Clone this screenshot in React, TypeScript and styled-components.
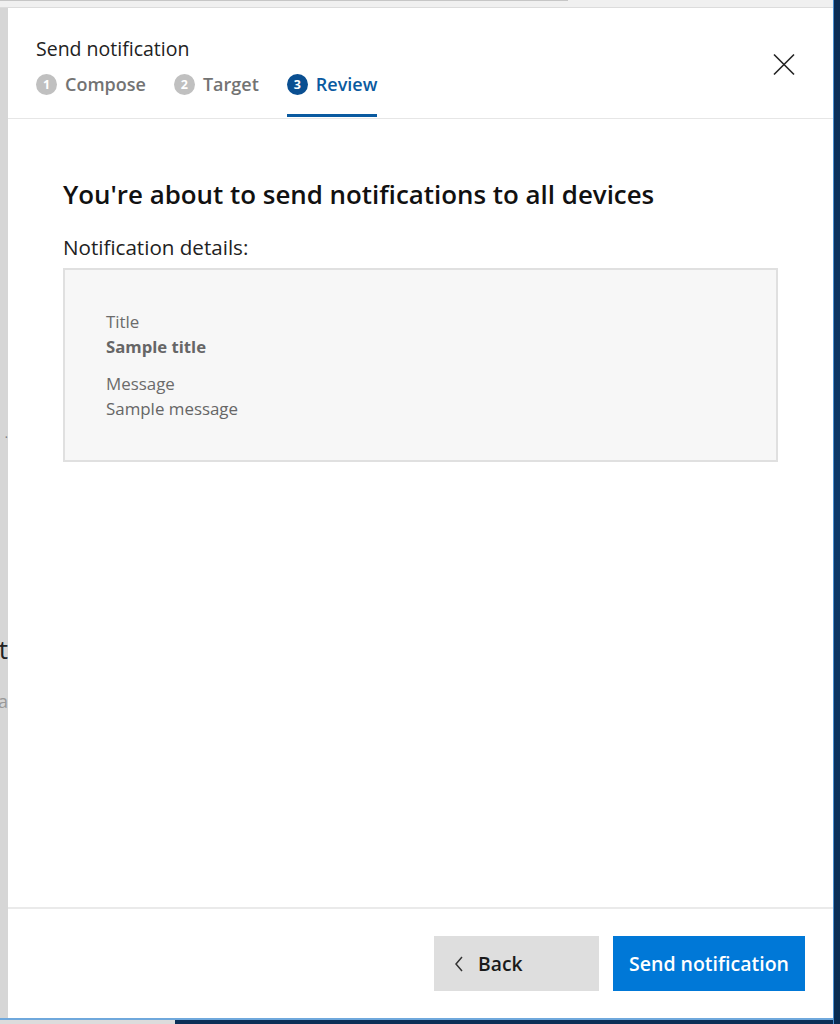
import React from "react";
import styled, { createGlobalStyle } from "styled-components";

const Global = createGlobalStyle`
  html, body { margin: 0; padding: 0; }
  body { font-family: "Open Sans", "Noto Sans", sans-serif; }
  * { box-sizing: border-box; }
`;

const Screen = styled.div`
  width: 840px;
  height: 1024px;
  display: flex;
  background: #0b2f57;
  overflow: hidden;
`;

const Main = styled.div`
  flex: 1;
  display: flex;
  flex-direction: column;
`;

const TopBar = styled.div`
  height: 8px;
  background: #f0f0f0;
  border-bottom: 1px solid #dcdcdc;
`;

const TopLine = styled.div`
  width: 568px;
  height: 1px;
  background: #c6c6c6;
`;

const Row = styled.div`
  flex: 1;
  display: flex;
`;

const LeftStrip = styled.div`
  width: 8px;
  background: #d6d6d6;
  position: relative;
  overflow: hidden;
`;

const Peek = styled.span<{ $top: number; $color: string; $size: number }>`
  position: absolute;
  top: ${(p) => p.$top}px;
  right: 0;
  font-size: ${(p) => p.$size}px;
  color: ${(p) => p.$color};
  line-height: 1;
`;

const Dialog = styled.div`
  flex: 1;
  background: #fff;
  display: flex;
  flex-direction: column;
`;

const Header = styled.div`
  height: 111px;
  border-bottom: 1px solid #e6e6e6;
  padding: 28px 28px 0 28px;
  display: flex;
  justify-content: space-between;
`;

const HeaderText = styled.div`
  display: flex;
  flex-direction: column;
`;

const DialogTitle = styled.div`
  font-size: 19.5px;
  color: #222;
  line-height: 26px;
`;

const Steps = styled.div`
  display: flex;
  gap: 28px;
  margin-top: 3px;
`;

const Step = styled.div<{ $active?: boolean }>`
  display: flex;
  align-items: center;
  gap: 8px;
  height: 52px;
  padding-bottom: 11px;
  border-bottom: 3px solid ${(p) => (p.$active ? "#0a5aa0" : "transparent")};
  color: ${(p) => (p.$active ? "#0a5aa0" : "#737373")};
  font-size: 18px;
  font-weight: 600;
`;

const Num = styled.span<{ $active?: boolean }>`
  width: 21px;
  height: 21px;
  border-radius: 50%;
  background: ${(p) => (p.$active ? "#0a4f91" : "#c0c0c0")};
  color: #fff;
  font-size: 12.5px;
  font-weight: 700;
  display: flex;
  align-items: center;
  justify-content: center;
`;

const Close = styled.button`
  border: none;
  background: none;
  padding: 0;
  width: 24px;
  height: 24px;
  margin-top: 17px;
  margin-right: 9px;
  cursor: pointer;
`;

const Body = styled.div`
  flex: 1;
  padding: 59px 55px 0 55px;
  display: flex;
  flex-direction: column;
`;

const Heading = styled.h1`
  margin: 0;
  font-size: 25.9px;
  font-weight: 600;
  color: #111;
  line-height: 32px;
`;

const Label = styled.div`
  margin-top: 23px;
  font-size: 20.6px;
  color: #222;
  line-height: 28px;
`;

const DetailsBox = styled.div`
  margin-top: 7px;
  width: 715px;
  height: 194px;
  background: #f7f7f7;
  border: 2px solid #e0e0e0;
  padding: 40px 41px;
  display: flex;
  flex-direction: column;
  gap: 13px;
`;

const Field = styled.div`
  display: flex;
  flex-direction: column;
`;

const FieldLabel = styled.div`
  font-size: 16.9px;
  color: #6b6b6b;
  line-height: 24.5px;
`;

const FieldValue = styled.div<{ $bold?: boolean }>`
  font-size: ${(p) => (p.$bold ? 16.7 : 16.9)}px;
  color: #666;
  font-weight: ${(p) => (p.$bold ? 700 : 400)};
  line-height: 24.5px;
`;

const Footer = styled.div`
  height: 111px;
  border-top: 2px solid #eaeaea;
  display: flex;
  justify-content: flex-end;
  align-items: flex-start;
  padding: 27px 28px 0 0;
  gap: 14px;
`;

const Button = styled.button<{ $primary?: boolean }>`
  height: 55px;
  border: none;
  display: flex;
  align-items: center;
  justify-content: ${(p) => (p.$primary ? "center" : "flex-start")};
  gap: 15px;
  font-family: "Open Sans", "Noto Sans", sans-serif;
  font-size: ${(p) => (p.$primary ? 19.5 : 19.3)}px;
  font-weight: 600;
  background: ${(p) => (p.$primary ? "#0078d7" : "#dedede")};
  color: ${(p) => (p.$primary ? "#fff" : "#1a1a1a")};
  width: ${(p) => (p.$primary ? 192 : 165)}px;
  padding: ${(p) => (p.$primary ? "0" : "0 0 0 21px")};
  cursor: pointer;
`;

const BottomBar = styled.div`
  height: 6px;
  border-top: 2px solid #6fa8dc;
  display: flex;
`;

const BottomLeft = styled.div`
  width: 175px;
  background: #dcdcdc;
`;

const RightEdge = styled.div`
  width: 8px;
  background: linear-gradient(180deg, #0b2d55 0%, #0d3a6b 50%, #0a2c52 100%);
  border-left: 1px solid #4a8fd0;
`;

export default function App() {
  return (
    <>
      <Global />
      <Screen>
        <Main>
          <TopBar>
            <TopLine />
          </TopBar>
          <Row>
            <LeftStrip>
              <Peek $top={424} $color="#777" $size={12}>·</Peek>
              <Peek $top={628} $color="#222" $size={26}>t</Peek>
              <Peek $top={684} $color="#999" $size={18}>a</Peek>
            </LeftStrip>
            <Dialog>
              <Header>
                <HeaderText>
                  <DialogTitle>Send notification</DialogTitle>
                  <Steps>
                    <Step>
                      <Num>1</Num>Compose
                    </Step>
                    <Step>
                      <Num>2</Num>Target
                    </Step>
                    <Step $active>
                      <Num $active>3</Num>Review
                    </Step>
                  </Steps>
                </HeaderText>
                <Close aria-label="Close">
                  <svg width="24" height="24" viewBox="0 0 24 24">
                    <path d="M2 1.5 L22 21.5 M22 1.5 L2 21.5" stroke="#222" strokeWidth="1.6" fill="none" />
                  </svg>
                </Close>
              </Header>
              <Body>
                <Heading>You're about to send notifications to all devices</Heading>
                <Label>Notification details:</Label>
                <DetailsBox>
                  <Field>
                    <FieldLabel>Title</FieldLabel>
                    <FieldValue $bold>Sample title</FieldValue>
                  </Field>
                  <Field>
                    <FieldLabel>Message</FieldLabel>
                    <FieldValue>Sample message</FieldValue>
                  </Field>
                </DetailsBox>
              </Body>
              <Footer>
                <Button>
                  <svg width="8" height="16" viewBox="0 0 8 16">
                    <path d="M7 1 L1 8 L7 15" stroke="#333" strokeWidth="1.5" fill="none" />
                  </svg>
                  Back
                </Button>
                <Button $primary>Send notification</Button>
              </Footer>
            </Dialog>
          </Row>
          <BottomBar>
            <BottomLeft />
          </BottomBar>
        </Main>
        <RightEdge />
      </Screen>
    </>
  );
}
